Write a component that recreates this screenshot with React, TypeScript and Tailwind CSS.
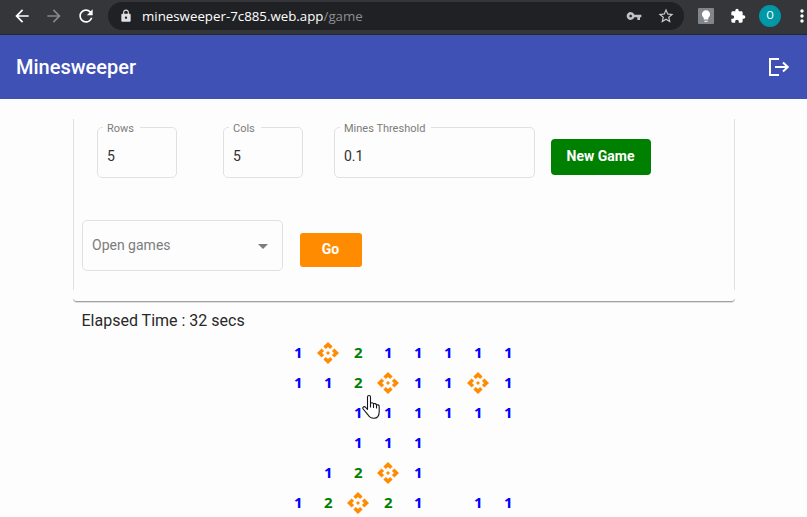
import type { ReactNode } from "react";
import {
  MdApi,
  MdArrowBack,
  MdArrowForward,
  MdRefresh,
  MdLock,
  MdVpnKey,
  MdStarOutline,
  MdExtension,
  MdLightbulb,
  MdMoreVert,
  MdArrowDropDown,
} from "react-icons/md";

const BOARD: string[] = [
  "1*211111",
  "112*11*1",
  "  111111",
  "  111   ",
  " 12*1   ",
  "12*21 11",
];

function BrowserBar() {
  return (
    <div className="flex h-[35px] w-full shrink-0 items-start overflow-hidden border-b border-[#26272a] bg-[#35363a] text-white">
      <MdArrowBack className="mt-[6px] ml-[12px] size-5 shrink-0" />
      <MdArrowForward className="mt-[6px] ml-[12px] size-5 shrink-0 text-[#86878a]" />
      <MdRefresh className="mt-[6px] ml-[12px] size-5 shrink-0" />
      <div className="mt-[2px] ml-[12px] flex h-[28px] w-[576px] shrink-0 items-center rounded-full bg-[#202124]">
        <MdLock className="ml-[11px] size-[14px] text-[#e0e0e2]" />
        <div className="ml-[9px] w-[480px] font-['Open_Sans',sans-serif] text-[13.3px] leading-[18px] whitespace-pre text-white">
          minesweeper-7c885.web.app<span className="text-[#8b8e92]">/game</span>
        </div>
        <MdVpnKey className="ml-[4px] size-4 text-[#c0c1c3]" />
        <MdStarOutline className="ml-[15px] size-[18px] text-[#c8c9cb]" />
      </div>
      <div className="mt-[8px] ml-[14px] flex size-4 shrink-0 items-center justify-center rounded-[1px] bg-[#80868b]">
        <MdLightbulb className="size-[14px]" />
      </div>
      <MdExtension className="mt-[8px] ml-[16px] size-4 shrink-0" />
      <div className="mt-[5px] ml-[13px] flex size-[22px] shrink-0 items-center justify-center rounded-full bg-[#0097a7] font-[Roboto,sans-serif] text-[11px]">
        O
      </div>
      <MdMoreVert className="mt-[6px] ml-[11px] size-5 shrink-0" />
    </div>
  );
}

function Field({ label, value, width }: { label: string; value: string; width: string }) {
  return (
    <fieldset className={`h-[59px] shrink-0 rounded-[5px] border border-[#e1e1e1] pl-[9px] ${width}`}>
      <legend className="ml-[-4px] h-[16px] pt-[4px] pr-[6px] pl-[4px] text-[11px] leading-[12px] text-[#7c7c7c]">{label}</legend>
      <div className="mt-[12px] text-[14px] leading-[18px] text-[#303030]">{value}</div>
    </fieldset>
  );
}

function Cell({ value }: { value: string }) {
  let content: ReactNode = null;
  if (value === "*") content = <MdApi className="size-6 shrink-0 text-[#ff8c00]" />;
  else if (value !== " ") content = <span className="pb-[2px]">{value}</span>;
  return (
    <div
      className={`flex size-[30px] items-center justify-center font-['Noto_Sans',sans-serif] text-[15px] leading-[28px] font-bold ${
        value === "2" ? "text-[#008000]" : "text-[#0000ff]"
      }`}
    >
      {content}
    </div>
  );
}

export default function App() {
  return (
    <div className="relative flex h-[517px] w-[807px] flex-col overflow-hidden bg-[#fdfdfd] font-[Roboto,sans-serif]">
      <BrowserBar />
      <header className="flex h-[64px] shrink-0 items-center justify-between bg-[#3f51b5] px-4 text-white">
        <h1 className="text-[20px] leading-8 font-medium">Minesweeper</h1>
        <svg className="mr-[1px] h-5 w-[22px]" viewBox="0 0 22 20" fill="none" stroke="currentColor" strokeWidth="2">
          <path d="M11 2H2v16h9M7 10h13M15 5.5l4.8 4.5-4.8 4.5" />
        </svg>
      </header>

      <main className="flex flex-col pl-[73px]">
        <section className="mt-[20px] h-[171px] w-[662px] shrink-0 border-x border-[#e1e1e1]">
          <div className="flex h-[59px] pl-[23px]">
            <div className="flex">
              <Field label="Rows" value="5" width="w-[80px]" />
              <div className="ml-[46px] flex">
                <Field label="Cols" value="5" width="w-[80px]" />
              </div>
              <div className="ml-[31px] flex">
                <Field label="Mines Threshold" value="0.1" width="w-[201px]" />
              </div>
            </div>
            <button className="mt-[20px] ml-[16px] h-[36px] w-[100px] rounded-[4px] bg-[#008000] pr-px pb-px text-[14px] font-bold text-white">
              New Game
            </button>
          </div>
          <div className="mt-[42px] flex pl-[8px]">
            <div className="flex h-[51px] w-[201px] items-center justify-between rounded-[5px] border border-[#e1e1e1] pr-[7px] pl-[9px] text-[14px] text-[#7c7c7c]">
              <span>Open games</span>
              <MdArrowDropDown className="size-6" />
            </div>
            <button className="mt-[13px] ml-[17px] h-[34px] w-[62px] rounded-[3px] bg-[#ff8c00] pr-px pb-px text-[14px] font-bold text-white">
              Go
            </button>
          </div>
        </section>
        <div className="mt-[4px] h-[9px] w-[662px] shrink-0 overflow-hidden">
          <div className="h-[8px] w-[662px] rounded-b-[4px] border-b border-[#a2a2a2] shadow-[0_1px_0_#dedede]" />
        </div>
        <p className="mt-[8px] ml-[8.5px] text-[16px] leading-[20px] text-[#292929]">Elapsed Time : 32 secs</p>
        <div className="mt-[7px] ml-[210.4px] grid w-[240px] grid-cols-8">
          {BOARD.flatMap((row, r) => row.split("").map((v, c) => <Cell key={`${r}-${c}`} value={v} />))}
        </div>
      </main>

      <svg className="absolute top-[394px] left-[362px] h-[26px] w-[19px]" viewBox="0 0 19 26">
        <path
          d="M5.5 15V3C5.500 1 8.500 1 8.500 3V9.500C9 8.200 11.500 8.500 11.500 10.200C12.200 9 14.500 9.500 14.500 11.200C15.200 10.300 17.200 10.800 17.200 12.500V17.500C17.200 21.500 15.500 24.300 11.800 24.300C8.800 24.300 7.300 23 6 20.800L1.200 15C.1 13.300 2 12 3.400 13.200L5.500 15.500M8.500 9.500V13M11.500 10.200V13.500M14.500 11.200V14"
          fill="white"
          stroke="#14141c"
          strokeWidth="1.1"
          strokeLinejoin="round"
          strokeLinecap="round"
        />
      </svg>
    </div>
  );
}
